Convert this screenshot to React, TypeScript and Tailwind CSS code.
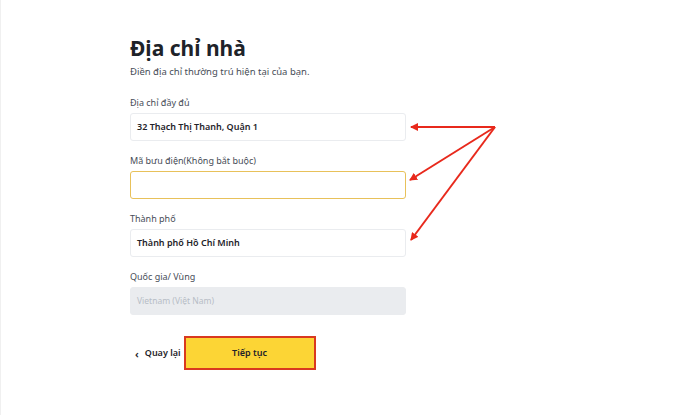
import React from "react"

const font = { fontFamily: '"Noto Sans", "Open Sans", sans-serif' }

function Field({
  label,
  value,
  focused,
  disabled,
}: {
  label: string
  value?: string
  focused?: boolean
  disabled?: boolean
}) {
  let box = "border-[#eaecef] bg-white"
  if (focused) box = "border-[#e8c15a] bg-white"
  if (disabled) box = "border-[#eaecef] bg-[#eaecef]"
  return (
    <div className="flex flex-col">
      <div className="text-[9px] leading-[13px] text-[#474d57] mb-[4px]">{label}</div>
      <div className={`h-[28px] w-[276px] rounded-[3px] border flex items-center px-[6px] ${box}`}>
        <span
          className={`${disabled ? "text-[8.5px] text-[#b7bdc6]" : "text-[9px] font-semibold text-[#1e2329]"}`}
        >
          {value}
        </span>
      </div>
    </div>
  )
}

export default function App() {
  return (
    <div className="relative w-[700px] h-[415px] bg-white border-l border-[#f0f0f0]" style={font}>
      <div className="pl-[129px] pt-[33px] flex flex-col">
        <h1 className="text-[21px] leading-[30px] font-bold text-[#1e2329]">Địa chỉ nhà</h1>
        <p className="mt-[2px] text-[9.5px] leading-[14px] text-[#474d57]">
          Điền địa chỉ thường trú hiện tại của bạn.
        </p>
        <div className="mt-[17px] flex flex-col gap-[13px]">
          <Field label="Địa chỉ đầy đủ" value="32 Thạch Thị Thanh, Quận 1" />
          <Field label="Mã bưu điện(Không bắt buộc)" focused />
          <Field label="Thành phố" value="Thành phố Hồ Chí Minh" />
          <Field label="Quốc gia/ Vùng" value="Vietnam (Việt Nam)" disabled />
        </div>
        <div className="mt-[21px] flex items-center">
          <button className="flex items-center gap-[6px] pl-[5px] text-[9px] font-semibold text-[#1e2329]">
            <span className="text-[11px] leading-none">‹</span>
            Quay lại
          </button>
          <button className="ml-[3px] h-[34px] w-[132px] bg-[#fcd535] border-2 border-[#d9391f] text-[9px] font-semibold text-[#1e2329]">
            Tiếp tục
          </button>
        </div>
      </div>
      <svg className="absolute inset-0 pointer-events-none" width="700" height="415">
        <defs>
          <marker id="ah" markerWidth="8" markerHeight="8" refX="7" refY="4" orient="auto" markerUnits="userSpaceOnUse">
            <path d="M0,0 L8,4 L0,8 Z" fill="#e8291c" />
          </marker>
        </defs>
        <g stroke="#e8291c" strokeWidth="2" fill="none">
          <line x1="494" y1="127" x2="410" y2="127" markerEnd="url(#ah)" />
          <line x1="494" y1="127" x2="409" y2="180" markerEnd="url(#ah)" />
          <line x1="494" y1="127" x2="410" y2="240" markerEnd="url(#ah)" />
        </g>
      </svg>
    </div>
  )
}
